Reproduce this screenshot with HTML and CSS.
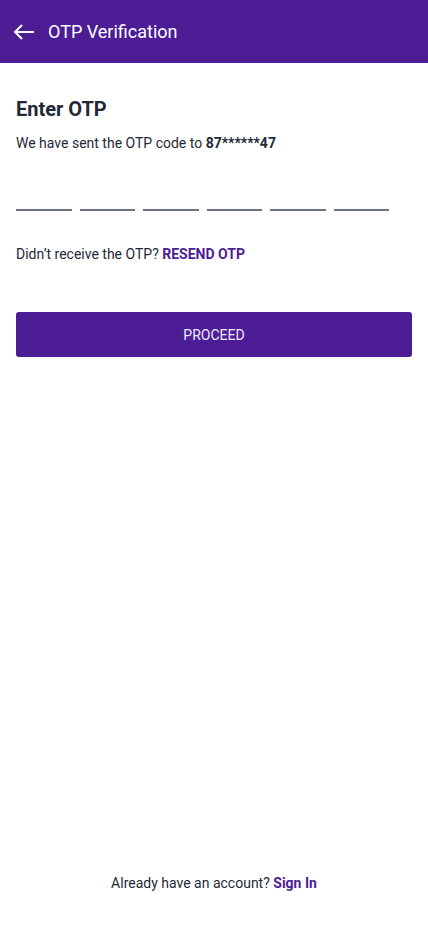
FILE: index.html
```html
<!DOCTYPE html>
<html>
<head>
<meta charset="utf-8">
<link rel="stylesheet" href="styles.css">
</head>
<body>
<div class="page">
  <header class="topbar">
    <svg class="back" width="22" height="16" viewBox="0 0 22 16"><path d="M21 8H2M9 1L2 8l7 7" fill="none" stroke="#fff" stroke-width="2"/></svg>
    <span class="title">OTP Verification</span>
  </header>
  <main class="content">
    <h1 class="heading">Enter OTP</h1>
    <p class="sub">We have sent the OTP code to <b>87******47</b></p>
    <div class="otp">
      <span class="box"></span><span class="box"></span><span class="box"></span><span class="box"></span><span class="box"></span><span class="box"></span>
    </div>
    <p class="resend">Didn’t receive the OTP? <a class="link">RESEND OTP</a></p>
    <button class="btn">PROCEED</button>
  </main>
  <footer class="foot">Already have an account? <a class="link">Sign In</a></footer>
</div>
</body>
</html>
```
FILE: styles.css
```css
* { box-sizing: border-box; }
html, body { margin: 0; padding: 0; }
body { font-family: Roboto, "Liberation Sans", sans-serif; color: #1f2937; background: #fff; }
.page { height: 926px; display: flex; flex-direction: column; }
.topbar { height: 63px; background: #4c1d95; display: flex; align-items: center; padding-left: 13px; }
.back { margin-right: 13px; }
.title { color: #fff; font-size: 18px; }
.content { flex: 1; padding: 33px 16px 0; }
.heading { margin: 0; font-size: 20px; font-weight: 700; line-height: 26px; }
.sub { margin: 11px 0 0; font-size: 14px; line-height: 20px; }
.sub b { font-weight: 700; }
.otp { display: flex; gap: 8px; width: 373px; margin-top: 22px; height: 36px; }
.box { flex: 1; border-bottom: 2px solid #6b7280; }
.resend { margin: 33px 0 0; font-size: 14px; line-height: 20px; }
.link { color: #4c1d95; font-weight: 700; }
.btn { margin-top: 48px; width: 100%; height: 45px; background: #4c1d95; color: #ede9fe; border: none; border-radius: 3px; font-family: Roboto, sans-serif; font-size: 14px; }
.foot { text-align: center; font-size: 14px; line-height: 20px; padding-bottom: 33px; }
```
